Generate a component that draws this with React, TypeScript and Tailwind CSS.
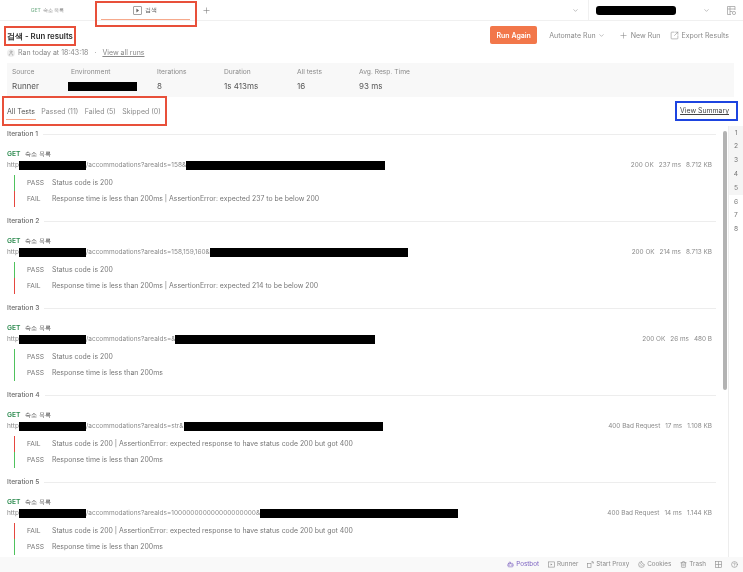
import { ChevronDown, Cookie, CircleHelp, Plus, Trash2, User, Bot, SquareArrowOutUpRight } from 'lucide-react';

const iterations = [
  {
    name: 'Iteration 1',
    query: '/accommodations?areaIds=158&',
    hideWidth: 199,
    status: '200 OK',
    time: '237 ms',
    size: '8.712 KB',
    tests: [
      { pass: true, text: 'Status code is 200' },
      { pass: false, text: 'Response time is less than 200ms | AssertionError: expected 237 to be below 200' },
    ],
  },
  {
    name: 'Iteration 2',
    query: '/accommodations?areaIds=158,159,160&',
    hideWidth: 198,
    status: '200 OK',
    time: '214 ms',
    size: '8.713 KB',
    tests: [
      { pass: true, text: 'Status code is 200' },
      { pass: false, text: 'Response time is less than 200ms | AssertionError: expected 214 to be below 200' },
    ],
  },
  {
    name: 'Iteration 3',
    query: '/accommodations?areaIds=&',
    hideWidth: 200,
    status: '200 OK',
    time: '26 ms',
    size: '480 B',
    tests: [
      { pass: true, text: 'Status code is 200' },
      { pass: true, text: 'Response time is less than 200ms' },
    ],
  },
  {
    name: 'Iteration 4',
    query: '/accommodations?areaIds=str&',
    hideWidth: 199,
    status: '400 Bad Request',
    time: '17 ms',
    size: '1.108 KB',
    tests: [
      { pass: false, text: 'Status code is 200 | AssertionError: expected response to have status code 200 but got 400' },
      { pass: true, text: 'Response time is less than 200ms' },
    ],
  },
  {
    name: 'Iteration 5',
    query: '/accommodations?areaIds=100000000000000000000&',
    hideWidth: 198,
    status: '400 Bad Request',
    time: '14 ms',
    size: '1.144 KB',
    tests: [
      { pass: false, text: 'Status code is 200 | AssertionError: expected response to have status code 200 but got 400' },
      { pass: true, text: 'Response time is less than 200ms' },
    ],
  },
];

const stats = [
  { label: 'Source', value: 'Runner', width: 'w-[59px]' },
  { label: 'Environment', value: '', width: 'w-[86px]' },
  { label: 'Iterations', value: '8', width: 'w-[67px]' },
  { label: 'Duration', value: '1s 413ms', width: 'w-[73px]' },
  { label: 'All tests', value: '16', width: 'w-[62px]' },
  { label: 'Avg. Resp. Time', value: '93 ms', width: 'w-[80px]' },
];

function Iteration({ data }: { data: (typeof iterations)[number] }) {
  return (
    <div className="h-[87px] flex flex-col">
      <div className="h-[16px] flex items-center gap-[5px] shrink-0">
        <span className="font-medium text-[#6b6b6b]">{data.name}</span>
        <div className="flex-1 h-px bg-[#ededed]" />
      </div>
      <div className="mt-[6px] flex items-center gap-[5px] h-[12px]">
        <span className="font-semibold text-[#2c8a4f]">GET</span>
        <span className="text-[#3a3a3a] text-[6px]">숙소 목록</span>
      </div>
      <div className="flex items-center justify-between h-[10px] pr-[4px] text-[6.5px]">
        <div className="flex items-center text-[#8a8a8a] whitespace-nowrap">
          <span>http</span>
          <span className="inline-block w-[67px] h-[9px] bg-black" />
          <span>{data.query}</span>
          <span className="inline-block h-[9px] bg-black" style={{ width: data.hideWidth }} />
        </div>
        <div className="flex gap-[5px] text-[#8a8a8a] whitespace-nowrap text-[6.4px]">
          <span>{data.status}</span>
          <span>{data.time}</span>
          <span>{data.size}</span>
        </div>
      </div>
      <div className="mt-[5px] ml-[7px] text-[6.9px]">
        {data.tests.map((t, i) => (
          <div
            key={i}
            className={`h-[16px] border-l pl-[12px] flex items-center ${t.pass ? 'border-[#4fc25d]' : 'border-[#e5483f]'}`}
          >
            <span className="w-[25px] text-[#777777] text-[6.7px]">{t.pass ? 'PASS' : 'FAIL'}</span>
            <span className="text-[#777777]">{t.text}</span>
          </div>
        ))}
      </div>
    </div>
  );
}

export default function App() {
  return (
    <div className="w-[743px] h-[572px] bg-white">
      <div className="relative w-full h-full overflow-hidden will-change-transform flex flex-col text-[6.7px] font-['Inter',sans-serif] text-[#6b6b6b] leading-none">
        {/* tabs */}
        <div className="h-[21px] shrink-0 flex items-center border-b border-[#f0f0f0]">
          <div className="w-[97px] flex justify-center gap-[2px] pr-[2px] pt-px text-[5.2px] text-[#8a8a8a]">
            <span className="text-[#7fb592] font-medium text-[5px]">GET</span>
            <span>숙소 목록</span>
          </div>
          <div className="w-[96px] h-full relative flex items-center justify-center gap-[3px] text-[#555555] text-[6px]">
            <svg width="9" height="9" viewBox="0 0 9 9" className="text-[#666666]">
              <rect x="0.5" y="0.5" width="8" height="8" rx="0.5" fill="none" stroke="currentColor" strokeWidth="0.6" />
              <path d="M3.4 2.6 6 4.5 3.4 6.4Z" fill="currentColor" />
            </svg>
            <span>검색</span>
            <div className="absolute left-[4px] right-[3px] bottom-0 h-px bg-[#f6a98c]" />
          </div>
          <Plus size={9} strokeWidth={1.5} className="ml-[9px] text-[#777777]" />
          <div className="flex-1" />
          <ChevronDown size={7} strokeWidth={1.8} className="text-[#8a8a8a] mr-[9px]" />
          <div className="w-px h-full bg-[#f0f0f0]" />
          <div className="w-[80px] h-[9px] ml-[7px] bg-black rounded-[3px]" />
          <ChevronDown size={7} strokeWidth={1.8} className="text-[#8a8a8a] ml-[27px]" />
          <svg width="11" height="11" viewBox="0 0 11 11" fill="none" stroke="#999999" strokeWidth="0.7" className="ml-[16px] mr-[6px]">
            <path d="M9 5V1.5H1.5v8H5M1.5 4H9M4 1.5v8M4 6.5h2.5" />
            <circle cx="8" cy="8" r="1.6" />
          </svg>
        </div>

        {/* header */}
        <div className="h-[42px] shrink-0 flex justify-between pl-[7px] pr-[14px]">
          <div>
            <div className="mt-[12px] text-[7.8px] font-semibold text-[#2b2b2b]">검색 - Run results</div>
            <div className="mt-[8px] flex items-center gap-[3px] text-[#888888] text-[7px]">
              <span className="w-[8px] h-[8px] rounded-full bg-[#efefef] flex items-center justify-center">
                <User size={6} strokeWidth={2} />
              </span>
              <span>Ran today at 18:43:18</span>
              <span className="mx-[3px]">·</span>
              <span className="underline">View all runs</span>
            </div>
          </div>
          <div className="flex items-start mt-[5px] text-[#8a8a8a] text-[7px]">
            <div className="w-[47px] h-[18px] rounded-[2px] bg-[#f2774a] text-white font-semibold flex items-center justify-center">
              Run Again
            </div>
            <div className="ml-[12px] h-[18px] flex items-center gap-[2px]">
              Automate Run <ChevronDown size={7} strokeWidth={1.8} />
            </div>
            <div className="ml-[14px] h-[18px] flex items-center gap-[3px]">
              <Plus size={9} strokeWidth={1.5} /> New Run
            </div>
            <div className="ml-[10px] h-[18px] flex items-center gap-[2px]">
              <SquareArrowOutUpRight size={9} strokeWidth={1.5} /> Export Results
            </div>
          </div>
        </div>

        {/* stats */}
        <div className="ml-[7px] mr-[9px] h-[34px] shrink-0 bg-[#f8f8f8] pl-[5px] flex items-center">
          {stats.map((s) => (
            <div key={s.label} className={`${s.width} flex flex-col gap-[7px]`}>
              <span className="text-[#8a8a8a]">{s.label}</span>
              {s.value ? (
                <span className="text-[8px] h-[9px] text-[#555555]">{s.value}</span>
              ) : (
                <span className="block w-[69px] -ml-[3px] h-[9px] bg-black" />
              )}
            </div>
          ))}
        </div>

        {/* result filters */}
        <div className="h-[29px] shrink-0 flex items-center justify-between pl-[7px] pr-[14px] text-[7px]">
          <div className="flex gap-[6.5px] text-[#8a8a8a]">
            <div className="relative text-[#555555]">
              All Tests
              <div className="absolute -left-px -right-px top-[11px] h-px bg-[#f6a98c]" />
            </div>
            <span>Passed (11)</span>
            <span>Failed (5)</span>
            <span>Skipped (0)</span>
          </div>
          <span className="underline text-[#444444] text-[6.9px]">View Summary</span>
        </div>

        {/* results */}
        <div className="flex-1 min-h-0 flex overflow-hidden">
          <div className="w-[716px] pl-[7px] shrink-0">
            {iterations.map((it) => (
              <Iteration key={it.name} data={it} />
            ))}
          </div>
          <div className="w-[4px] ml-[7px] h-[259px] mt-[5px] rounded-sm bg-[#b3b3b3] shrink-0" />
          <div className="ml-[1px] flex-1 border-l border-[#ededed] flex flex-col">
            <div className="bg-[#f5f5f5]">
              {[1, 2, 3, 4, 5].map((n) => (
                <div key={n} className="h-[13.8px] flex items-center justify-center text-[#777777]">
                  {n}
                </div>
              ))}
            </div>
            {[6, 7, 8].map((n) => (
              <div key={n} className="h-[13.8px] flex items-center justify-center text-[#777777]">
                {n}
              </div>
            ))}
          </div>
        </div>

        {/* status bar */}
        <div className="h-[15px] shrink-0 bg-[#f9f9f9] flex items-center justify-end gap-[9px] pr-[5px] text-[#8a8a8a] text-[6.3px]">
          <span className="flex items-center gap-[2px] text-[#7a5fc0]">
            <Bot size={7} strokeWidth={2} /> Postbot
          </span>
          <span className="flex items-center gap-[2px]">
            <svg width="7" height="7" viewBox="0 0 7 7">
              <rect x="0.4" y="0.9" width="6.2" height="5.2" fill="none" stroke="currentColor" strokeWidth="0.6" />
              <path d="M2.6 2.4 4.4 3.5 2.6 4.6Z" fill="currentColor" />
            </svg>
            Runner
          </span>
          <span className="flex items-center gap-[2px]">
            <svg width="7" height="7" viewBox="0 0 7 7" fill="none" stroke="currentColor" strokeWidth="0.6">
              <rect x="0.5" y="2.5" width="3.5" height="4" />
              <path d="M4.5 1.2a1.5 1.5 0 0 1 1.5 1.3M4.5 0.2a2.5 2.5 0 0 1 2.4 2.3" />
            </svg>
            Start Proxy
          </span>
          <span className="flex items-center gap-[2px]">
            <Cookie size={7} strokeWidth={2} /> Cookies
          </span>
          <span className="flex items-center gap-[2px]">
            <Trash2 size={7} strokeWidth={2} /> Trash
          </span>
          <svg width="7" height="7" viewBox="0 0 7 7" fill="none" stroke="currentColor" strokeWidth="0.6">
            <rect x="0.5" y="0.5" width="6" height="6" />
            <path d="M0.5 3.5h6M3.5 0.5v6" />
          </svg>
          <CircleHelp size={7} strokeWidth={2} />
        </div>

        {/* annotation boxes drawn over the screenshot */}
        <div className="absolute left-[95px] top-px w-[102px] h-[26px] border-2 border-[#e8503a]" />
        <div className="absolute left-[4px] top-[26px] w-[72px] h-[20px] border-2 border-[#e8503a]" />
        <div className="absolute left-[2px] top-[96px] w-[165px] h-[30px] border-2 border-[#e8503a]" />
        <div className="absolute left-[675px] top-[101px] w-[63px] h-[20px] border-2 border-[#1d44e0]" />
      </div>
    </div>
  );
}
